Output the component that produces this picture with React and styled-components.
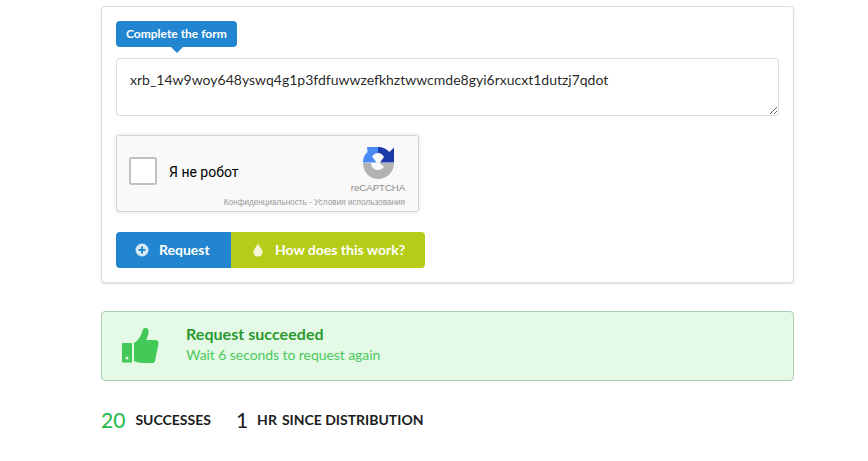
import React from "react";
import styled, { createGlobalStyle } from "styled-components";

const Global = createGlobalStyle`
  html, body { margin: 0; padding: 0; background: #fff; }
  body { font-family: Lato, "Liberation Sans", sans-serif; color: #1b1c1d; }
  * { box-sizing: border-box; }
`;
const Page = styled.div`
  width: 868px; height: 461px; overflow: hidden;
  padding: 6px 74px 0 101px;
`;
const Card = styled.div`
  height: 277px; background: #fff; border-radius: 4px;
  border: 1px solid #dededf; box-shadow: 0 1px 2px rgba(34,36,38,.15);
  padding: 14px 14px 0;
`;
const Tag = styled.div`
  position: relative; display: inline-flex; align-items: center;
  height: 26px; padding: 0 10px; background: #2185d0; color: #fff;
  border-radius: 4px; font-size: 12px; font-weight: 700; line-height: 1;
  &::after {
    content: ""; position: absolute; left: 55px; bottom: -6px;
    width: 12px; height: 12px; background: #2185d0;
    clip-path: polygon(0 50%, 100% 50%, 50% 100%);
  }
`;
const AddressBox = styled.textarea`
  display: block; width: 663px; height: 58px; margin-top: 11px;
  padding: 13px 13px; border: 1px solid rgba(34,36,38,.15); border-radius: 4px;
  font: 400 14px/1.2 Lato, "Liberation Sans", sans-serif; color: rgba(0,0,0,.87);
  resize: vertical; outline: none; background: #fff;
`;
const Captcha = styled.div`
  margin-top: 19px; width: 303px; height: 77px; position: relative;
  background: #f9f9f9; border: 1px solid #d3d3d3; border-radius: 3px;
  box-shadow: 0 0 4px 1px rgba(0,0,0,.08);
  display: flex; align-items: flex-start; font-family: Roboto, "Liberation Sans", sans-serif;
`;
const CheckBox = styled.div`
  width: 28px; height: 28px; margin: 21px 0 0 12px; background: #fff;
  border: 2px solid #c1c1c1; border-radius: 2px; flex: none;
`;
const CaptchaLabel = styled.div`
  margin: 28px 0 0 12px; font-size: 14px; line-height: 17px; color: #000;
`;
const Brand = styled.div`
  position: absolute; top: 11px; right: 13px; width: 54px;
  display: flex; flex-direction: column; align-items: center;
`;
const BrandName = styled.div`
  font-size: 9.6px; line-height: 10px; margin-top: 4px; color: #8a8a8a; white-space: nowrap;
  font-family: "Liberation Sans", sans-serif;
`;
const Legal = styled.div`
  position: absolute; right: 13px; bottom: 3px; font-size: 8.2px; line-height: 10px; color: #999;
  white-space: nowrap; font-family: "Liberation Sans", sans-serif;
`;
const Buttons = styled.div`display: flex; margin-top: 20px;`;
const Btn = styled.div`
  height: 36px; display: flex; align-items: center; color: #fff;
  font-size: 14px; font-weight: 700; width: ${p => p.$w}px; padding: 0 0 1px ${p => p.$pad}px;
  background: ${p => p.$bg}; border-radius: ${p => p.$radius};
  & svg { margin-right: ${p => p.$gap}px; flex: none; }
`;
const Alert = styled.div`
  margin-top: 28px; height: 70px; background: #e5f9e7; border: 1px solid #b1cdb4;
  border-radius: 4px; display: flex; align-items: center; padding-left: 20px;
`;
const AlertBody = styled.div`margin-left: 27px; padding-bottom: 3px;`;
const AlertTitle = styled.div`font-size: 16px; font-weight: 700; line-height: 20px; color: #2c992f; letter-spacing: .05px;`;
const AlertText = styled.div`font-size: 14px; line-height: 20px; margin-top: 1px; color: #4bc95c; letter-spacing: -.07px;`;
const Stats = styled.div`display: flex; align-items: center; margin-top: 27px; height: 24px;`;
const Stat = styled.div`display: flex; align-items: center; margin-right: ${p => p.$mr}px;`;
const Value = styled.div`
  font-size: 21px; line-height: 24px; font-weight: 400; color: ${p => p.$color}; margin-right: ${p => p.$mr}px;
`;
const StatLabel = styled.div`font-size: 14px; font-weight: 700; line-height: 18px; color: #1b1c1d; text-transform: uppercase;`;
const Space = styled.span`margin-left: 5px;`;

const PlusIcon = () => (
  <svg width="14" height="14" viewBox="0 0 14 14">
    <path fillRule="evenodd" fill="#d6e8f6" d="M7 .5a6.5 6.5 0 1 1 0 13 6.5 6.5 0 0 1 0-13zM6 3.6v2.4H3.6v2H6v2.4h2V8h2.4V6H8V3.6z" />
  </svg>
);
const DropIcon = () => (
  <svg width="10" height="14" viewBox="0 0 10 14">
    <path fill="#f2f6d6" d="M5 .5C6 3.3 9.600 6 9.600 9.200 9.600 11.800 7.500 13.500 5 13.500S.4 11.800.4 9.200C.4 6 4 3.300 5 .5z" />
  </svg>
);
const ThumbIcon = () => (
  <svg width="37" height="38" viewBox="0 0 37 38">
    <path fill="#43c958" fillRule="evenodd" d="M0 16h10v19.500H0zM5 29.500a1.500 1.500 0 1 0 0 3 1.500 1.500 0 0 0 0-3z" />
    <path fill="#43c958" d="M12 16C16 14 19 9 20 5 20.500 2.500 21.500 1 23.500 1 26 1 27 3.500 26.500 6 26 9 25 11.500 24 13H33C35.500 13 37 14.500 36.500 17L33 34C32.500 35.500 31.500 36 30 36H21C17 36 15 35 12 34z" />
  </svg>
);
const RecaptchaIcon = () => (
  <svg width="32" height="32" viewBox="0 0 32 32">
    <path fill="#b2b2b2" d="M1 16H9C9.500 20.500 12 23 16 23 18.500 23 20.500 22 22 20L18 16H32C32 25 25 32 16 32 7.500 32 1 25 1 16z" />
    <path fill="#1c3aa9" d="M16 0C20.500 0 24.500 1.900 27.500 5L32 .5V15.500H18L22 10C20.500 7.500 18.500 6 16 6z" />
    <path fill="#4a8af4" d="M5 0H16V6C13.500 6 11.500 7.500 10 9.500L14.500 15.500H1C1 11 2.500 7.500 5.500 5z" />
  </svg>
);

export default function App() {
  return (
    <Page>
      <Global />
      <Card>
        <Tag>Complete the form</Tag>
        <AddressBox readOnly defaultValue="xrb_14w9woy648yswq4g1p3fdfuwwzefkhztwwcmde8gyi6rxucxt1dutzj7qdot" />
        <Captcha>
          <CheckBox />
          <CaptchaLabel>Я не робот</CaptchaLabel>
          <Brand>
            <RecaptchaIcon />
            <BrandName>reCAPTCHA</BrandName>
          </Brand>
          <Legal>Конфиденциальность - Условия использования</Legal>
        </Captcha>
        <Buttons>
          <Btn $w={115} $pad={19} $gap={10} $bg="#2185d0" $radius="4px 0 0 4px"><PlusIcon />Request</Btn>
          <Btn $w={194} $pad={22} $gap={12} $bg="#b5cc18" $radius="0 4px 4px 0"><DropIcon />How does this work?</Btn>
        </Buttons>
      </Card>
      <Alert>
        <ThumbIcon />
        <AlertBody>
          <AlertTitle>Request succeeded</AlertTitle>
          <AlertText>Wait 6 seconds to request again</AlertText>
        </AlertBody>
      </Alert>
      <Stats>
        <Stat $mr={25}><Value $mr={10} $color="#21ba45">20</Value><StatLabel>Successes</StatLabel></Stat>
        <Stat $mr={0}><Value $mr={9} $color="#1b1c1d">1</Value><StatLabel>Hr<Space>since distribution</Space></StatLabel></Stat>
      </Stats>
    </Page>
  );
}
